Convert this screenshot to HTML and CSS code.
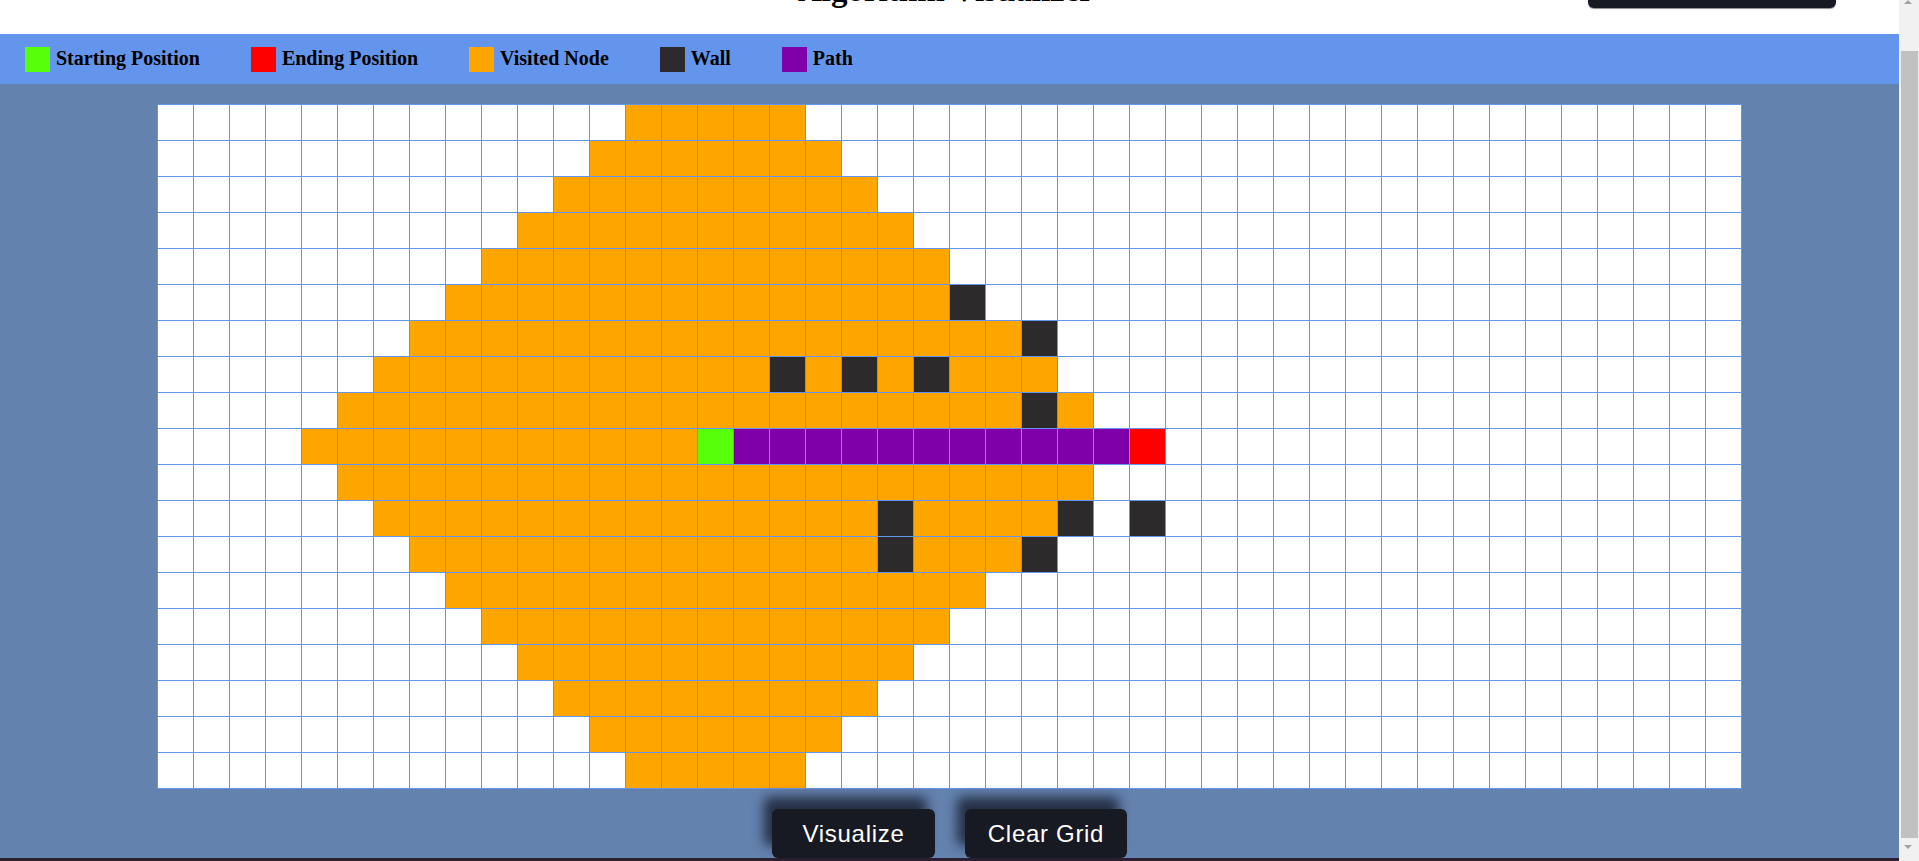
FILE: index.html
```html
<!DOCTYPE html>
<html lang="en">
<head>
<meta charset="utf-8">
<title>Algorithm Visualizer</title>
<link rel="stylesheet" href="styles.css">
</head>
<body>
<header class="topbar">
  <div class="spacer"></div>
  <h1 class="title">Algorithm Visualizer</h1>
  <div class="actions">
    <button class="algo-select">Dijkstra's Algorithm</button>
  </div>
</header>
<nav class="legend">
  <div class="legend-item"><span class="swatch start"></span><span class="legend-label">Starting Position</span></div>
  <div class="legend-item"><span class="swatch end"></span><span class="legend-label">Ending Position</span></div>
  <div class="legend-item"><span class="swatch visited"></span><span class="legend-label">Visited Node</span></div>
  <div class="legend-item"><span class="swatch wall"></span><span class="legend-label">Wall</span></div>
  <div class="legend-item"><span class="swatch path"></span><span class="legend-label">Path</span></div>
</nav>
<main class="board">
  <div class="grid" id="grid"></div>
  <div class="controls">
    <button class="btn btn-left">Visualize</button>
    <button class="btn btn-right">Clear Grid</button>
  </div>
</main>
<footer class="footer"></footer>
<div class="scrollbar" aria-hidden="true">
  <span class="sb-arrow sb-up"></span>
  <span class="sb-thumb"></span>
  <span class="sb-arrow sb-down"></span>
</div>
<script src="script.js"></script>
</body>
</html>
```

FILE: styles.css
```css
* { box-sizing: border-box; }
html, body { margin: 0; padding: 0; }
body {
  font-family: "Liberation Serif", "Times New Roman", serif;
  background: #6482ae;
  padding-right: 20px;
}
.topbar {
  height: 71px;
  background: #ffffff;
  display: grid;
  grid-template-columns: 1fr auto 1fr;
  align-items: start;
  padding-right: 7px;
}
.title {
  margin: 0;
  padding-top: 8px;
  font-size: 33px;
  line-height: 38px;
  font-weight: bold;
  color: #000;
  white-space: nowrap;
}
.actions {
  display: flex;
  justify-content: flex-end;
  padding-right: 56px;
}
.algo-select {
  margin-top: 9px;
  width: 248px;
  height: 36px;
  padding: 10px 0 6px 12px;
  text-align: left;
  border: none;
  border-radius: 6px;
  background: #171923;
  color: #fff;
  font-family: "Liberation Sans", Arial, sans-serif;
  font-size: 17px;
  line-height: 20px;
  box-shadow: 0 1px 1px rgba(0,0,0,0.45);
}
.legend {
  height: 50px;
  background: #6495ed;
  display: flex;
  align-items: center;
  gap: 51px;
  padding-left: 25px;
}
.legend-item {
  display: flex;
  align-items: center;
  gap: 6px;
}
.swatch {
  display: block;
  width: 25px;
  height: 25px;
}
.legend-label {
  font-weight: bold;
  font-size: 20px;
  line-height: 22px;
  padding-bottom: 2px;
  color: #000;
}
.start { background: #58ff0a; }
.end { background: #ff0000; }
.visited { background: #ffa500; }
.wall { background: #2d2a2b; }
.path { background: #7f00a8; }

.board {
  display: flex;
  flex-direction: column;
  align-items: center;
  gap: 20px;
  padding-top: 20px;
  height: 774px;
}
.grid {
  display: grid;
  grid-template-columns: repeat(44, 35px);
  grid-auto-rows: 35px;
  gap: 1px;
  padding: 1px;
  background: #6495ed;
}
.cell { background: #ffffff; }
.cell.start { background: #58ff0a; }
.cell.end { background: #ff0000; }
.cell.visited { background: #ffa500; }
.cell.wall { background: #2d2a2b; }
.cell.path { background: #7f00a8; }

.controls {
  display: flex;
  gap: 30px;
}
.btn {
  height: 49px;
  width: 163px;
  border: none;
  border-radius: 6px;
  background: #171923;
  color: #ffffff;
  font-family: "Liberation Sans", Arial, sans-serif;
  font-size: 24px;
  letter-spacing: 0.7px;
  box-shadow: -8px -12px 12px rgba(18, 20, 35, 0.75);
}
.btn-right { width: 162px; }
.footer {
  height: 10px;
  background: #2a2030;
}

/* imitation of the browser's classic scrollbar seen in the reference */
.scrollbar {
  position: fixed;
  top: 0;
  right: 0;
  width: 20px;
  height: 100vh;
  background: #f1f1f1;
}
.sb-thumb {
  position: absolute;
  top: 51px;
  left: 2px;
  width: 17px;
  height: 787px;
  background: #c1c1c1;
}
.sb-arrow {
  position: absolute;
  left: 5px;
  width: 0;
  height: 0;
  border-left: 4.5px solid transparent;
  border-right: 4.5px solid transparent;
}
.sb-up {
  top: 0;
  border-bottom: 4px solid #a3a3a3;
}
.sb-down {
  bottom: 12px;
  border-top: 4px solid #a3a3a3;
}
```

FILE: script.js
```js
(function () {
  var ROWS = 19, COLS = 44, SR = 9, SC = 15, ER = 9, EC = 27;
  var walls = ["5,22","6,24","7,17","7,19","7,21","8,24","11,20","11,25","11,27","12,20","12,24"];
  var grid = document.getElementById('grid');
  var frag = document.createDocumentFragment();
  for (var r = 0; r < ROWS; r++) {
    for (var c = 0; c < COLS; c++) {
      var d = document.createElement('div');
      var cls = 'cell';
      var key = r + ',' + c;
      if (r === SR && c === SC) cls += ' start';
      else if (r === ER && c === EC) cls += ' end';
      else if (walls.indexOf(key) !== -1) cls += ' wall';
      else if (r === SR && c > SC && c < EC) cls += ' path';
      else if (Math.abs(r - SR) + Math.abs(c - SC) <= 11) cls += ' visited';
      d.className = cls;
      frag.appendChild(d);
    }
  }
  grid.appendChild(frag);
  window.scrollTo(0, 37);
})();
```
